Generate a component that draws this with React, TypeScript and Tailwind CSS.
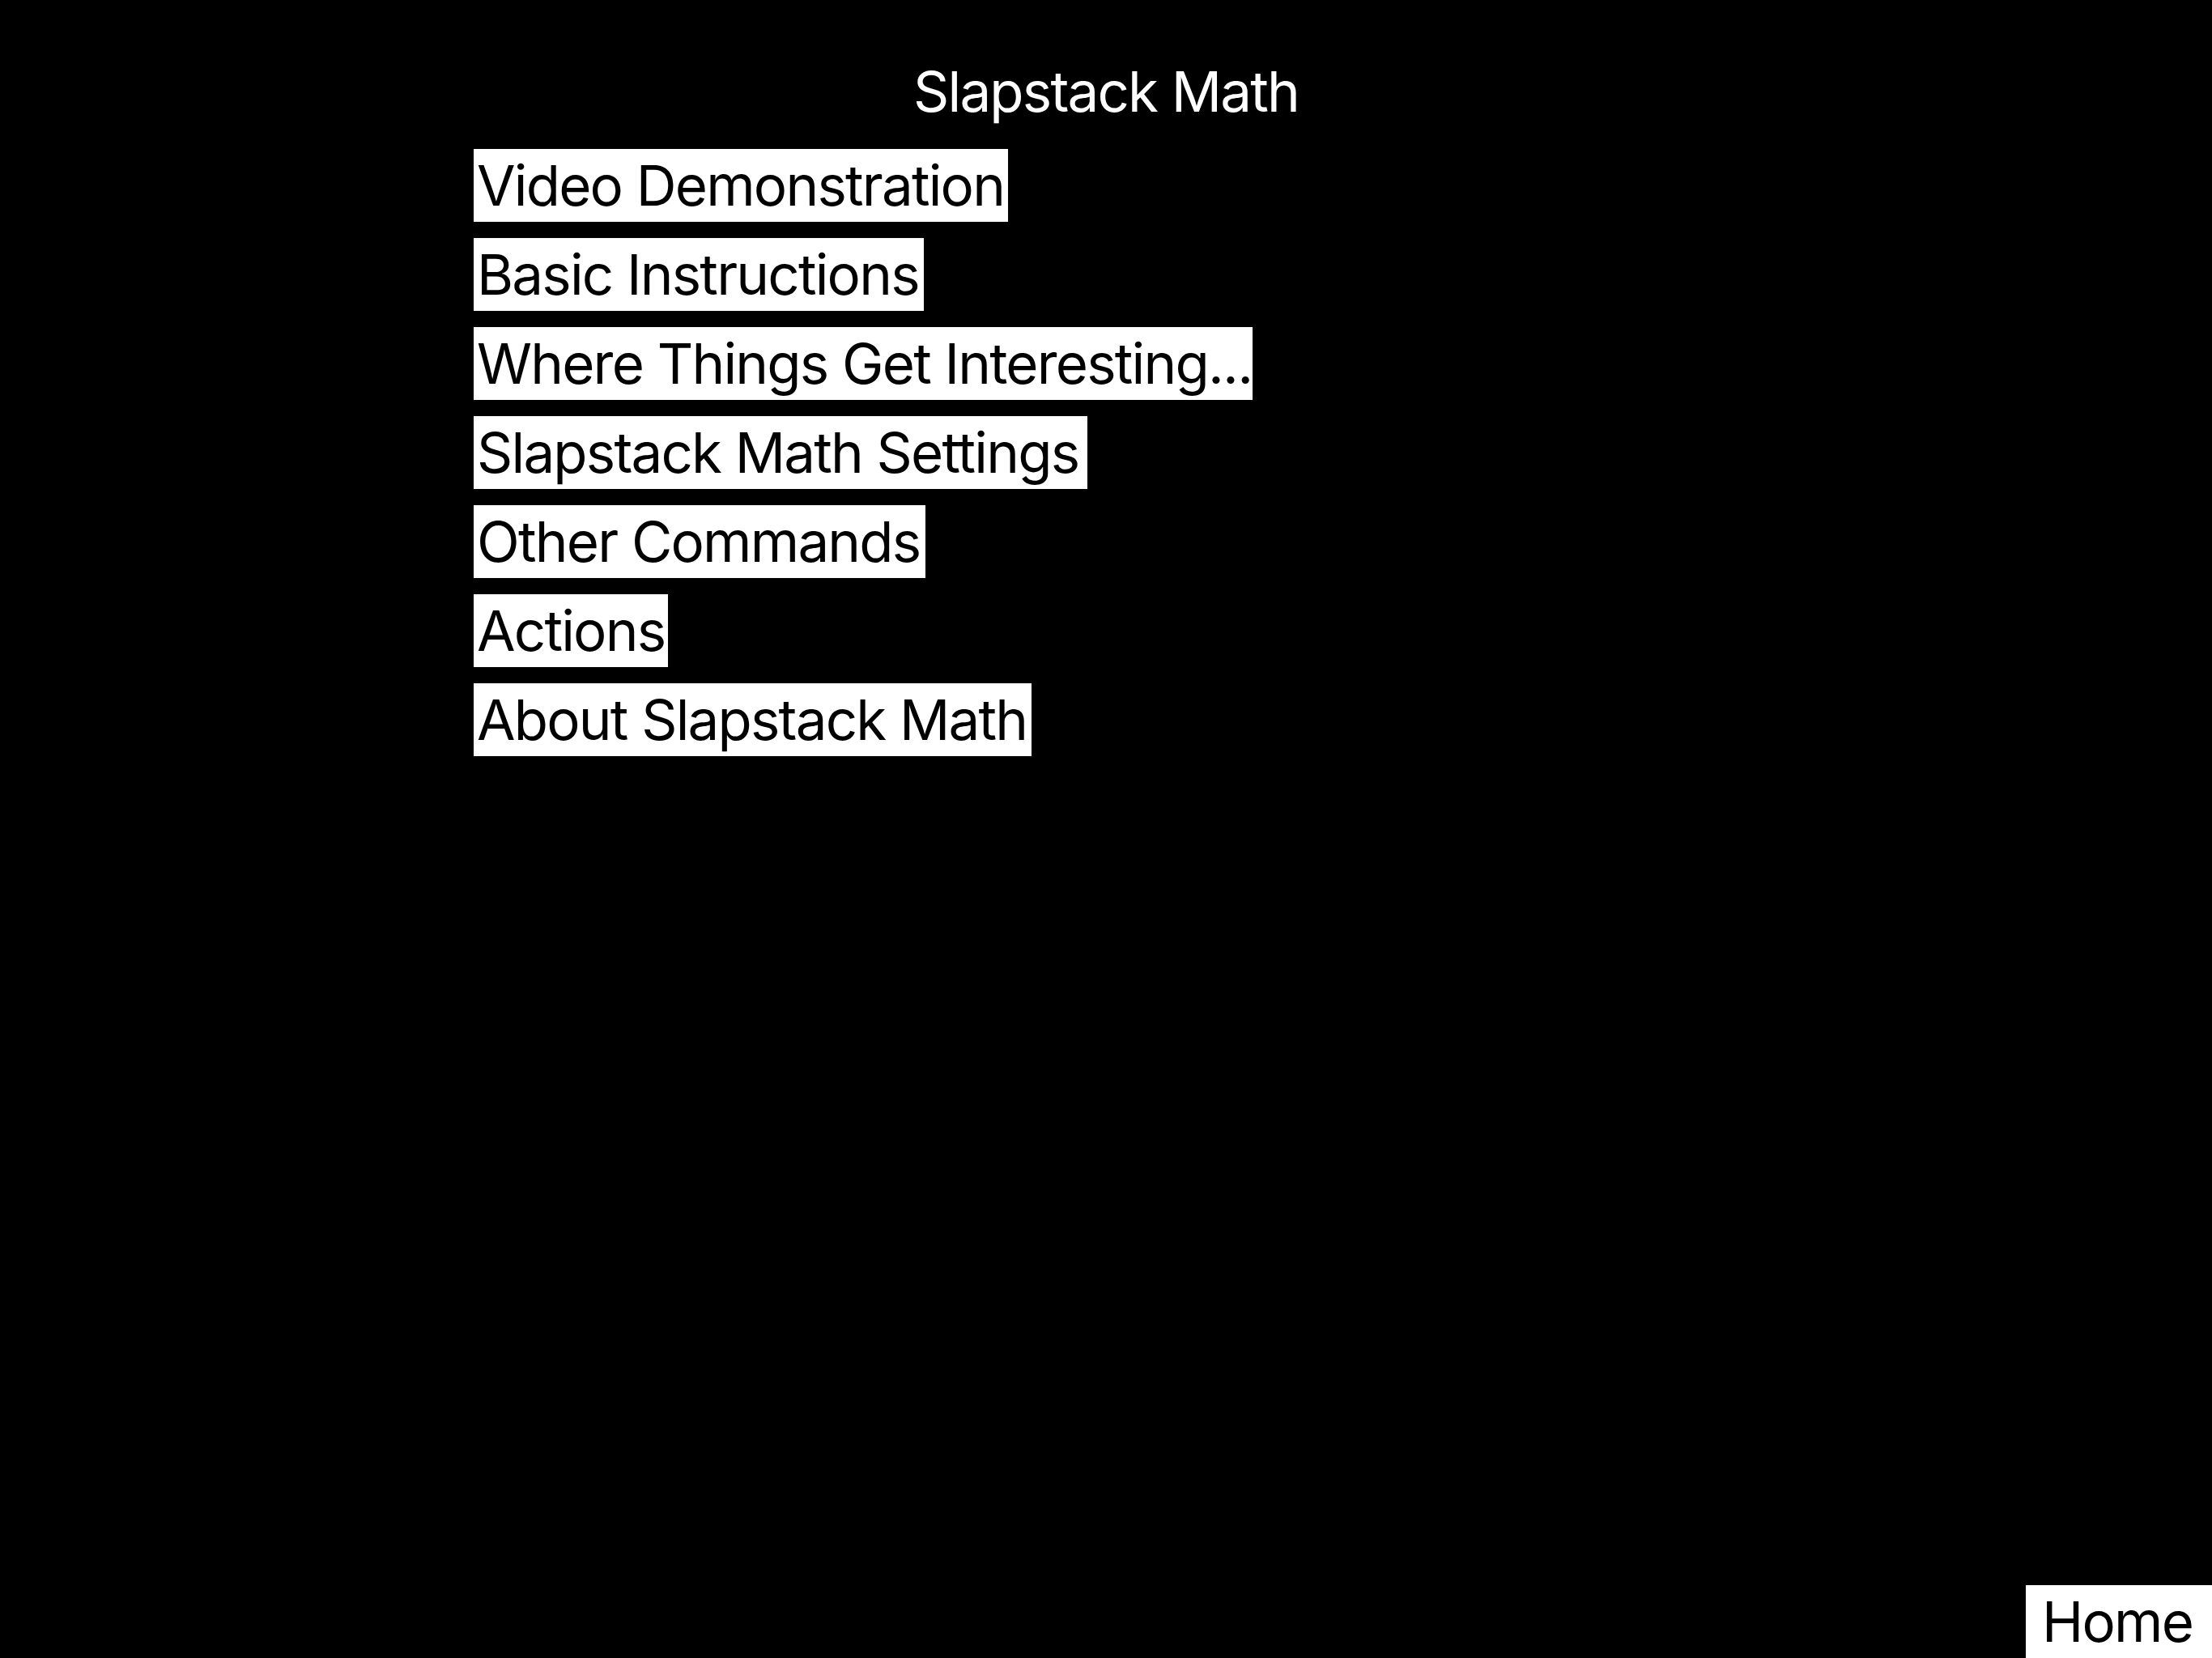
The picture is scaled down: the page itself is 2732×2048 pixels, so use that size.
const items: { label: string; width: string }[] = [
  { label: "Video Demonstration", width: "w-[660px]" },
  { label: "Basic Instructions", width: "w-[556px]" },
  { label: "Where Things Get Interesting...", width: "w-[962px]" },
  { label: "Slapstack Math Settings", width: "w-[758px]" },
  { label: "Other Commands", width: "w-[558px]" },
  { label: "Actions", width: "w-[240px]" },
  { label: "About Slapstack Math", width: "w-[689px]" },
];

export default function App() {
  return (
    <div className="flex flex-col h-screen w-full bg-black font-['Inter',sans-serif] text-[69px] leading-[90px] tracking-[-1.8px] overflow-hidden">
      <h1 className="pt-[68px] text-center text-white font-normal">Slapstack Math</h1>

      <nav className="flex flex-col gap-[20px] pl-[585px] mt-[26px]">
        {items.map((item) => (
          <button
            key={item.label}
            className={`${item.width} h-[90px] bg-white text-black text-left pl-[4px] whitespace-nowrap tracking-[-1.8px]`}
          >
            {item.label}
          </button>
        ))}
      </nav>

      <button className="mt-auto self-end w-[230px] h-[90px] bg-white text-black text-left pl-[20px] tracking-[-1.8px]">
        Home
      </button>
    </div>
  );
}
